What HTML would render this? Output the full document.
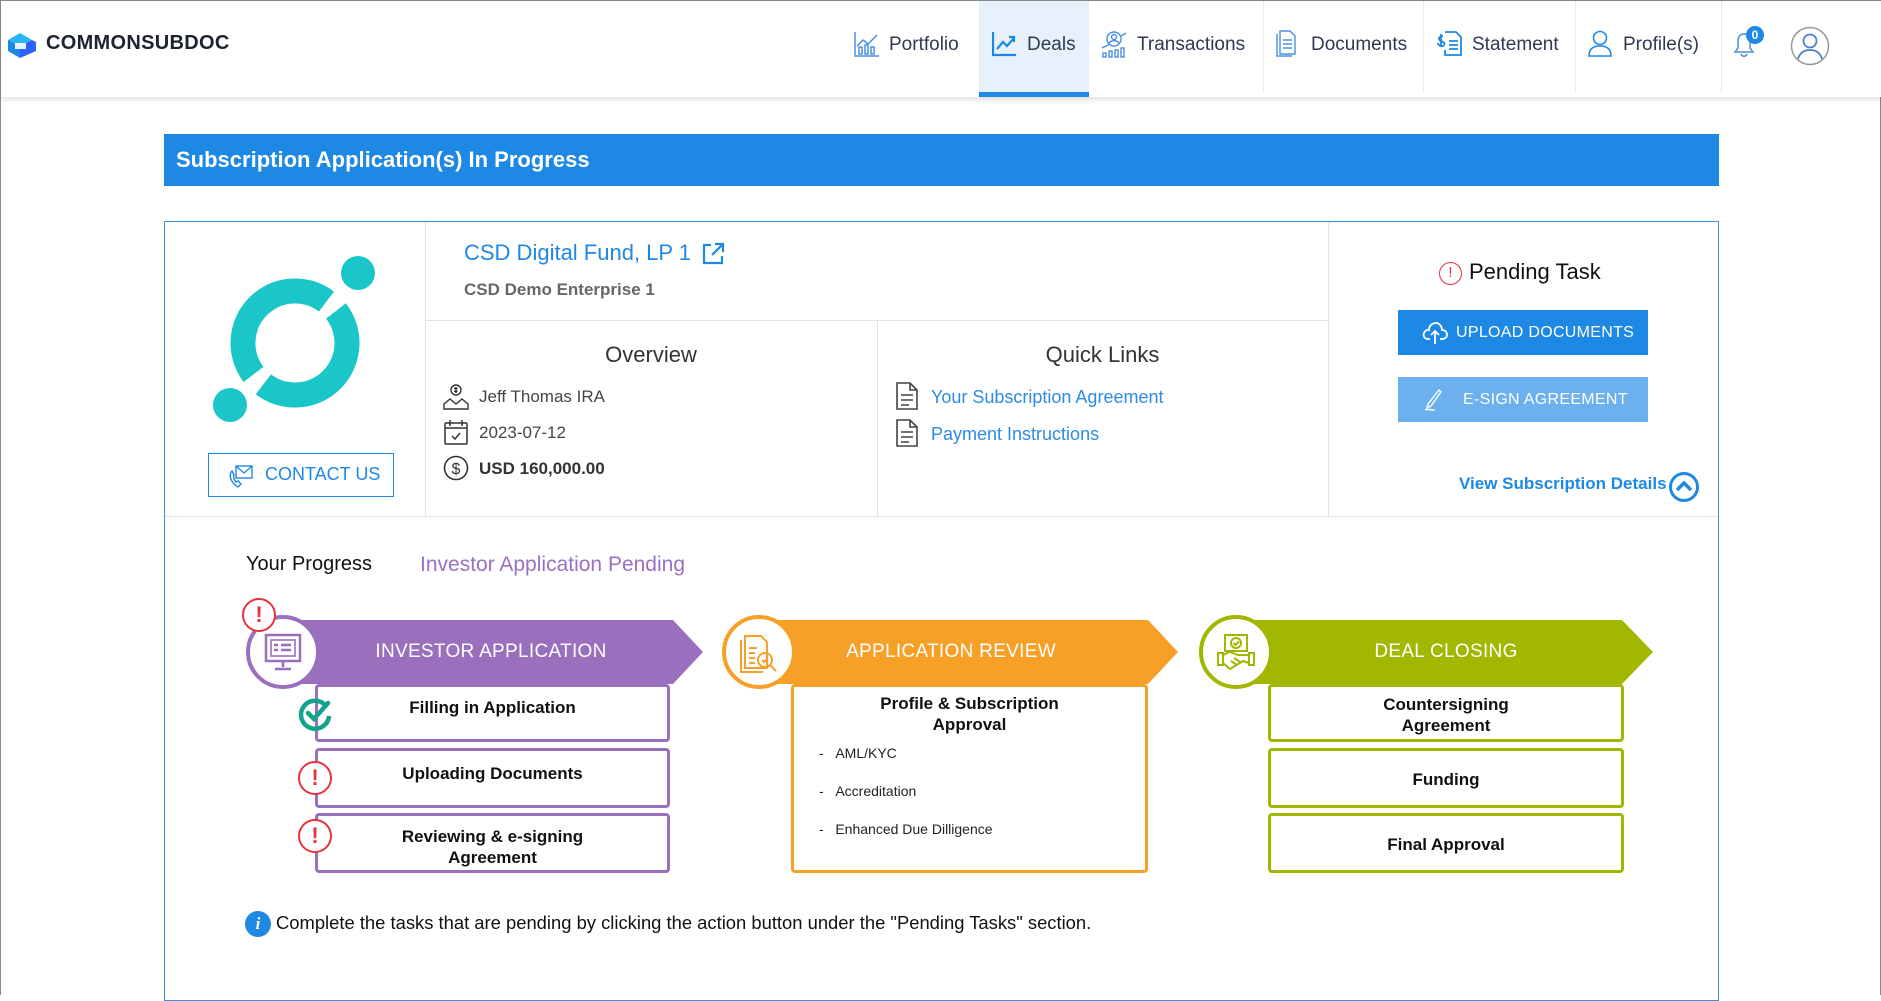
<!DOCTYPE html>
<html><head><meta charset="utf-8"><style>
*{box-sizing:border-box;margin:0;padding:0}
body{width:1881px;height:995px;overflow:hidden;background:#fff;font-family:"Liberation Sans",Arial,sans-serif;position:relative;border:1px solid #8a8a8a;border-bottom:none}
.a{position:absolute}
.nav{font-size:19px;color:#2f3a4f;top:33px;white-space:nowrap}
.sep{top:0;width:1px;height:92px;background:#ececec}
.box{position:absolute;border:3px solid;border-radius:4px;background:#fff;text-align:center;font-size:17px;font-weight:bold;color:#111;line-height:21px}
.hdr{position:absolute;height:64px;color:#fff;font-size:19px;line-height:64px;text-align:center;letter-spacing:.3px}
.circ{position:absolute;width:74px;height:74px;border-radius:50%;background:#fff;border:4px solid}
.ex{position:absolute;width:34px;height:34px;border-radius:50%;border:2.5px solid #e8323c;background:#fff;color:#e8323c;font-size:22px;line-height:29px;text-align:center;font-weight:bold}
</style></head><body>
<!-- header -->
<div class="a" style="left:0;top:0;width:1881px;height:96px;background:#fff;box-shadow:0 3px 5px rgba(0,0,0,.12)"></div>
<svg class="a" style="left:5px;top:31px" width="32" height="27" viewBox="0 0 32 27"><path d="M2 8 L14 1 L26 8 L14 14Z" fill="#29b6f6"/><path d="M2 8 L2 19 L14 26 L14 14Z" fill="#1e88e5"/><path d="M14 14 L26 8 L30 10 L30 19 L14 26Z" fill="#2962ff"/><path d="M9 11 L20 11 L20 17 L9 17Z" fill="#fff" opacity=".9"/></svg>
<div class="a" style="left:45px;top:31px;font-size:20px;font-weight:bold;color:#1d2330;letter-spacing:.3px">COMMONSUBDOC</div>

<div class="a" style="left:978px;top:0;width:110px;height:96px;background:#e7f1fb;border-bottom:5px solid #1e88e5"></div>
<div class="a sep" style="left:1262px"></div><div class="a sep" style="left:1422px"></div><div class="a sep" style="left:1574px"></div><div class="a sep" style="left:1720px"></div>
<svg class="a" style="left:853px;top:30px" width="26" height="26" viewBox="0 0 26 26" fill="none" stroke="#4a90e2" stroke-width="1.5"><path d="M1 1V25H25"/><path d="M3 15L9 9L14 13L23 4"/><rect x="5" y="16" width="3" height="7"/><rect x="11" y="14" width="3" height="9"/><rect x="17" y="16" width="3" height="7"/></svg>
<div class="a nav" style="left:888px">Portfolio</div>
<svg class="a" style="left:991px;top:30px" width="25" height="26" viewBox="0 0 25 26" fill="none" stroke="#1e88e5" stroke-width="2.2"><path d="M1 1V24H24"/><path d="M5 18L11 11L15 15L22 7M17 6H22V11"/></svg>
<div class="a nav" style="left:1026px">Deals</div>
<svg class="a" style="left:1100px;top:29px" width="26" height="28" viewBox="0 0 26 28" fill="none" stroke="#4a90e2" stroke-width="1.4"><circle cx="13" cy="9" r="7"/><circle cx="13" cy="7" r="2.5"/><path d="M8 13c2-3 8-3 10 0"/><path d="M1 18L9 14M20 6L25 3"/><rect x="2" y="23" width="3" height="4"/><rect x="8" y="21" width="3" height="6"/><rect x="14" y="20" width="3" height="7"/><rect x="20" y="18" width="3" height="9"/></svg>
<div class="a nav" style="left:1136px">Transactions</div>
<svg class="a" style="left:1275px;top:29px" width="20" height="27" viewBox="0 0 20 27" fill="none" stroke="#4a90e2" stroke-width="1.4"><path d="M4 1H14L19 6V24H4Z"/><path d="M1 4V26H16"/><path d="M7 10H16M7 14H16M7 18H16"/></svg>
<div class="a nav" style="left:1310px">Documents</div>
<svg class="a" style="left:1435px;top:29px" width="26" height="27" viewBox="0 0 26 27" fill="none" stroke="#1e88e5" stroke-width="1.8"><path d="M9 2H20L25 7V25H9V20"/><path d="M13 11H22M13 15H22M13 19H22"/><path d="M7 6C3 6 2 9 4 10.5S10 12 8 15S2 15 2 13M5 4V17"/></svg>
<div class="a nav" style="left:1471px">Statement</div>
<svg class="a" style="left:1587px;top:29px" width="24" height="27" viewBox="0 0 24 27" fill="none" stroke="#1e88e5" stroke-width="1.6"><circle cx="12" cy="8" r="6.5"/><path d="M1 26C1 18 6 16 12 16S23 18 23 26Z"/></svg>
<div class="a nav" style="left:1622px">Profile(s)</div>
<svg class="a" style="left:1733px;top:31px" width="20" height="26" viewBox="0 0 20 26" fill="none" stroke="#4a90e2" stroke-width="1.5"><path d="M10 2C5 2 4 6 4 10V16L1 20H19L16 16V10C16 6 15 2 10 2Z"/><path d="M7 22C8 25 12 25 13 22"/></svg>
<div class="a" style="left:1745px;top:25px;width:18px;height:18px;border-radius:50%;background:#1e88e5;color:#fff;font-size:12px;font-weight:bold;text-align:center;line-height:18px">0</div>
<svg class="a" style="left:1789px;top:25px" width="40" height="40" viewBox="0 0 40 40" fill="none"><circle cx="20" cy="20" r="18.5" stroke="#999" stroke-width="1.5"/><circle cx="20" cy="15" r="6.5" stroke="#4a7fd0" stroke-width="1.8"/><path d="M8 33C10 26 15 24 20 24S30 26 32 33" stroke="#4a7fd0" stroke-width="1.8"/></svg>

<!-- banner -->
<div class="a" style="left:163px;top:133px;width:1555px;height:52px;background:#1e88e5;color:#fff;font-size:22px;font-weight:bold;line-height:52px;padding-left:12px">Subscription Application(s) In Progress</div>

<!-- card -->
<div class="a" style="left:163px;top:220px;width:1555px;height:780px;border:1px solid #3b8fe0"></div>
<div class="a" style="left:424px;top:221px;width:1px;height:294px;background:#e3e3e3"></div>
<div class="a" style="left:1327px;top:221px;width:1px;height:294px;background:#e3e3e3"></div>
<div class="a" style="left:876px;top:319px;width:1px;height:196px;background:#e3e3e3"></div>
<div class="a" style="left:424px;top:319px;width:903px;height:1px;background:#e3e3e3"></div>
<div class="a" style="left:164px;top:515px;width:1553px;height:1px;background:#e3e3e3"></div>

<!-- logo -->
<svg class="a" style="left:204px;top:252px" width="180" height="175" viewBox="0 0 180 175"><circle cx="90" cy="90" r="52" fill="none" stroke="#1bc6c9" stroke-width="25" stroke-dasharray="150 14 149 14" transform="rotate(-38 90 90)"/><circle cx="153" cy="20" r="17" fill="#1bc6c9"/><circle cx="25" cy="152" r="17" fill="#1bc6c9"/></svg>
<div class="a" style="left:207px;top:452px;width:186px;height:44px;border:1.5px solid #1e88e5;color:#1e88e5;font-size:18px;line-height:41px;padding-left:56px">CONTACT US</div>
<svg class="a" style="left:227px;top:462px" width="26" height="26" viewBox="0 0 26 26" fill="none" stroke="#1e88e5" stroke-width="1.4"><rect x="8" y="3" width="16" height="12"/><path d="M8 3L16 10L24 3"/><path d="M4 8C0 12 3 20 10 24L13 21L10 18L8 19C6 17 5 14 6 12Z"/></svg>

<div class="a" style="left:463px;top:239px;font-size:22px;color:#1e88e5">CSD Digital Fund, LP 1</div>
<svg class="a" style="left:700px;top:241px" width="24" height="24" viewBox="0 0 24 24" fill="none" stroke="#1e88e5" stroke-width="2.2"><path d="M10 3H3V21H21V14"/><path d="M14 2H22V10M22 2L11 13"/></svg>
<div class="a" style="left:463px;top:279px;font-size:17px;font-weight:bold;color:#666">CSD Demo Enterprise 1</div>

<div class="a" style="left:424px;top:341px;width:452px;text-align:center;font-size:22px;color:#333">Overview</div>
<svg class="a" style="left:442px;top:383px" width="26" height="26" viewBox="0 0 26 26" fill="none" stroke="#333" stroke-width="1.4"><circle cx="13" cy="6" r="5"/><path d="M13 3V9M11 4.5H14.5M11 7.5H14.5"/><path d="M1 25V20L7 15L13 20L19 15L25 20V25Z"/></svg>
<div class="a" style="left:478px;top:386px;font-size:17px;color:#444">Jeff Thomas IRA</div>
<svg class="a" style="left:443px;top:418px" width="24" height="26" viewBox="0 0 24 26" fill="none" stroke="#333" stroke-width="1.5"><rect x="1" y="4" width="22" height="21" rx="1"/><path d="M1 9H23M6 1V7M18 1V7M8 17L11 20L16 14"/></svg>
<div class="a" style="left:478px;top:422px;font-size:17px;color:#444">2023-07-12</div>
<svg class="a" style="left:442px;top:454px" width="26" height="26" viewBox="0 0 26 26"><circle cx="13" cy="13" r="11.5" fill="none" stroke="#333" stroke-width="1.6"/><text x="13" y="19" font-size="16" text-anchor="middle" fill="#333" font-family="Liberation Sans">$</text></svg>
<div class="a" style="left:478px;top:458px;font-size:17px;font-weight:bold;color:#333">USD 160,000.00</div>

<div class="a" style="left:876px;top:341px;width:451px;text-align:center;font-size:22px;color:#333">Quick Links</div>
<svg class="a" style="left:895px;top:381px" width="22" height="28" viewBox="0 0 22 28" fill="none" stroke="#444" stroke-width="1.6"><path d="M1 1H14L21 8V27H1Z"/><path d="M14 1V8H21M5 13H17M5 18H17M5 23H13"/></svg>
<div class="a" style="left:930px;top:386px;font-size:18px;color:#2c8be6">Your Subscription Agreement</div>
<svg class="a" style="left:895px;top:418px" width="22" height="28" viewBox="0 0 22 28" fill="none" stroke="#444" stroke-width="1.6"><path d="M1 1H14L21 8V27H1Z"/><path d="M14 1V8H21M5 13H17M5 18H17M5 23H13"/></svg>
<div class="a" style="left:930px;top:423px;font-size:18px;color:#2c8be6">Payment Instructions</div>

<!-- pending -->
<div class="a" style="left:1438px;top:261px;width:23px;height:23px;border-radius:50%;border:1.8px solid #e8323c;color:#e8323c;font-size:15px;line-height:19px;text-align:center">!</div>
<div class="a" style="left:1468px;top:258px;font-size:22px;color:#111">Pending Task</div>
<div class="a" style="left:1397px;top:309px;width:250px;height:45px;background:#1e88e5;color:#fff;font-size:16px;line-height:45px;padding-left:58px;letter-spacing:.3px">UPLOAD DOCUMENTS</div>
<svg class="a" style="left:1421px;top:318px" width="26" height="26" viewBox="0 0 26 26" fill="none" stroke="#fff" stroke-width="1.8"><path d="M8 20H6C2 20 1 16 2 14S5 10 7 11C7 6 11 4 14 4S20 7 20 11C23 11 25 13 25 16S22 20 20 20H18"/><path d="M13 25V12M9 16L13 12L17 16"/></svg>
<div class="a" style="left:1397px;top:376px;width:250px;height:45px;background:#6db0ee;color:#fff;font-size:16px;line-height:45px;padding-left:65px;letter-spacing:.3px">E-SIGN AGREEMENT</div>
<svg class="a" style="left:1422px;top:387px" width="22" height="24" viewBox="0 0 22 24" fill="none" stroke="#fff" stroke-width="1.4"><path d="M16 2L5 16L4 20L8 18L18 4Z"/><path d="M2 22C6 20 8 23 12 22"/></svg>
<div class="a" style="left:1458px;top:473px;font-size:17px;font-weight:bold;color:#1e88e5">View Subscription Details</div>
<div class="a" style="left:1668px;top:471px;width:30px;height:30px;border-radius:50%;border:3px solid #1e88e5"></div>
<svg class="a" style="left:1674px;top:479px" width="18" height="12" viewBox="0 0 18 12" fill="none" stroke="#1e88e5" stroke-width="3.5" stroke-linecap="round"><path d="M3 9L9 3L15 9"/></svg>

<!-- progress -->
<div class="a" style="left:245px;top:552px;font-size:20px;color:#111">Your Progress</div>
<div class="a" style="left:419px;top:552px;font-size:21px;color:#9b6fc4">Investor Application Pending</div>

<!-- purple -->
<svg class="a" style="left:282px;top:619px" width="422" height="64" viewBox="0 0 422 64"><path d="M0 0H390L420 32L390 64H0Z" fill="#9a70be"/></svg>
<div class="hdr" style="left:320px;top:619px;width:340px">INVESTOR APPLICATION</div>
<div class="circ" style="left:245px;top:614px;border-color:#9a70be"></div>
<svg class="a" style="left:263px;top:632px" width="40" height="40" viewBox="0 0 40 40" fill="none" stroke="#9a70be" stroke-width="2.5"><rect x="2" y="2" width="34" height="26"/><rect x="7" y="7" width="24" height="16" stroke-width="1.6"/><path d="M10 12H14M17 12H27M10 17H14M17 17H27M19 28V34M11 36H27"/></svg>
<div class="ex" style="left:241px;top:597px">!</div>
<div class="box" style="left:314px;top:683px;width:355px;height:58px;border-color:#9a70be;padding-top:10px">Filling in Application</div>
<div class="box" style="left:314px;top:747px;width:355px;height:60px;border-color:#9a70be;padding-top:12px">Uploading Documents</div>
<div class="box" style="left:314px;top:812px;width:355px;height:60px;border-color:#9a70be;padding-top:10px">Reviewing &amp; e-signing<br>Agreement</div>
<svg class="a" style="left:297px;top:695px" width="36" height="36" viewBox="0 0 36 36" fill="none" stroke="#12a38b" stroke-width="4.5"><path d="M28 10A14 14 0 1 0 31 20"/><path d="M10 17L16 23L30 7" stroke-linecap="round"/></svg>
<div class="ex" style="left:297px;top:760px">!</div>
<div class="ex" style="left:297px;top:818px">!</div>

<!-- orange -->
<svg class="a" style="left:757px;top:619px" width="422" height="64" viewBox="0 0 422 64"><path d="M0 0H390L420 32L390 64H0Z" fill="#f7a028"/></svg>
<div class="hdr" style="left:800px;top:619px;width:300px">APPLICATION REVIEW</div>
<div class="circ" style="left:721px;top:614px;border-color:#f7a028"></div>
<svg class="a" style="left:738px;top:631px" width="40" height="42" viewBox="0 0 40 42" fill="none" stroke="#f7a028" stroke-width="2"><path d="M6 4H22L28 10V36H6Z"/><path d="M2 8V40H24"/><path d="M10 16H18M10 21H16M10 26H16M10 31H16"/><circle cx="26" cy="28" r="7"/><path d="M31 33L37 39"/><path d="M23 28L25 30L29 26"/></svg>
<div class="box" style="left:790px;top:683px;width:357px;height:189px;border-color:#f7a028;padding-top:6px">Profile &amp; Subscription<br>Approval</div>
<div class="a" style="left:818px;top:733px;font-size:14px;color:#222;line-height:38px">-&nbsp;&nbsp;&nbsp;AML/KYC<br>-&nbsp;&nbsp;&nbsp;Accreditation<br>-&nbsp;&nbsp;&nbsp;Enhanced Due Dilligence</div>

<!-- green -->
<svg class="a" style="left:1234px;top:619px" width="422" height="64" viewBox="0 0 422 64"><path d="M0 0H387L418 32L387 64H0Z" fill="#a2b700"/></svg>
<div class="hdr" style="left:1290px;top:619px;width:310px">DEAL CLOSING</div>
<div class="circ" style="left:1198px;top:614px;border-color:#a2b700"></div>
<svg class="a" style="left:1215px;top:632px" width="40" height="40" viewBox="0 0 40 40" fill="none" stroke="#a2b700" stroke-width="2"><path d="M9 2H31V18H9Z"/><circle cx="20" cy="10" r="5"/><path d="M17.5 10L19.5 12L23 8.5"/><path d="M2 20H7V32H2ZM33 20H38V32H33Z"/><path d="M7 22L14 19L22 22L33 22M7 30L14 36L27 28L33 30M15 28L21 32M18 25L24 29"/></svg>
<div class="box" style="left:1267px;top:683px;width:356px;height:58px;border-color:#a2b700;padding-top:7px">Countersigning<br>Agreement</div>
<div class="box" style="left:1267px;top:747px;width:356px;height:60px;border-color:#a2b700;padding-top:18px">Funding</div>
<div class="box" style="left:1267px;top:812px;width:356px;height:60px;border-color:#a2b700;padding-top:18px">Final Approval</div>

<!-- info -->
<div class="a" style="left:244px;top:910px;width:26px;height:26px;border-radius:50%;background:#1e88e5;color:#fff;font-family:'Liberation Serif',serif;font-style:italic;font-weight:bold;font-size:17px;text-align:center;line-height:26px">i</div>
<div class="a" style="left:275px;top:911px;font-size:18.4px;color:#111">Complete the tasks that are pending by clicking the action button under the "Pending Tasks" section.</div>
</body></html>
